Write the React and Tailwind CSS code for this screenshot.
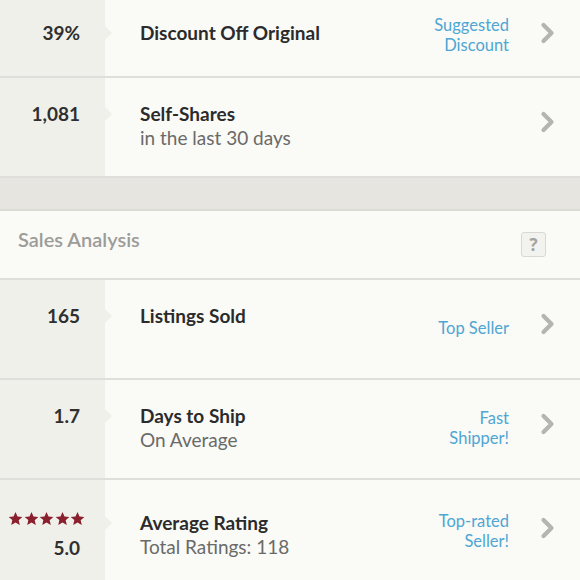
import React from "react";

const font = { fontFamily: "Lato, 'Open Sans', sans-serif" };

function Chevron() {
  return (
    <svg width="16" height="22" viewBox="0 0 16 22" className="block">
      <path d="M3.5 3 L11.5 11 L3.5 19" fill="none" stroke="#b4b4b0" strokeWidth="4.2" strokeLinecap="round" strokeLinejoin="round" />
    </svg>
  );
}

function Star() {
  return (
    <svg width="15" height="15" viewBox="0 0 24 24">
      <path d="M12 1.5l3.2 7.1 7.7.8-5.8 5.2 1.7 7.6L12 18.3l-6.8 3.9 1.7-7.6L1.1 9.4l7.7-.8z" fill="#8a1f2d" />
    </svg>
  );
}

function Row({ h, pt, left, title, sub, right, textShift = 0, chevShift = 0, last }) {
  return (
    <div className={`relative flex ${last ? "" : "border-b-2 border-[#dededa]"}`} style={{ height: h }}>
      <div className="w-[105px] shrink-0 bg-[#f0f0ea] pr-[25px] text-right" style={{ paddingTop: pt }}>
        {left}
      </div>
      <div
        className="absolute left-[105px] h-0 w-0 border-y-[7px] border-l-[7px] border-y-transparent border-l-[#f0f0ea]"
        style={{ top: pt + 5 }}
      />
      <div className="flex-1 pl-[35px]" style={{ paddingTop: pt }}>
        <div className="text-[19px] font-bold leading-[24px] text-[#2b2b2b]">{title}</div>
        {sub && <div className="text-[19px] leading-[24px] text-[#6a6a68]">{sub}</div>}
      </div>
      <div className="flex items-center">
        <div className="text-right text-[16.5px] leading-[20px] text-[#4ea6d3]" style={{ marginTop: textShift * 2 }}>
          {right}
        </div>
        <div className="ml-[31px] mr-[24px] w-[16px]" style={{ marginTop: chevShift * 2 }}>
          <Chevron />
        </div>
      </div>
    </div>
  );
}

const num = (t) => <div className="text-[19px] font-bold leading-[24px] text-[#2f2f2f]">{t}</div>;

export default function App() {
  return (
    <div className="h-[580px] w-[580px] overflow-hidden bg-[#fafaf7]" style={font}>
      <Row
        h={78}
        pt={21}
        left={num("39%")}
        title="Discount Off Original"
        right={<>Suggested<br />Discount</>}
        textShift={-3}
        chevShift={-5}
      />
      <Row h={100} pt={24} left={num("1,081")} title="Self-Shares" sub="in the last 30 days" right={null} chevShift={-5} />
      <div className="h-[33px] border-b-2 border-[#dcdcd6] bg-[#e6e5df]" />
      <div className="flex h-[69px] items-center justify-between border-b-2 border-[#dededa] pl-[18px] pr-[34px]">
        <div className="mb-[12px] text-[20px] font-semibold text-[#9c9c98]">Sales Analysis</div>
        <div
          className="flex h-[25px] w-[25px] items-center justify-center rounded-[3px] border border-[#d8d8d4] bg-[#f2f2ef] text-[17px] font-bold leading-[25px] text-[#a4a4a0]"
          style={{ fontFamily: "'Open Sans', sans-serif" }}
        >
          ?
        </div>
      </div>
      <Row h={100} pt={24} left={num("165")} title="Listings Sold" right="Top Seller" textShift={-1} chevShift={-5} />
      <Row h={100} pt={24} left={num("1.7")} title="Days to Ship" sub="On Average" right={<>Fast<br />Shipper!</>} textShift={-1} chevShift={-5} />
      <Row
        h={102}
        pt={31}
        left={
          <div className="-mr-[5px] flex flex-col items-end">
            <div className="flex gap-[0.5px]">
              <Star />
              <Star />
              <Star />
              <Star />
              <Star />
            </div>
            <div className="mr-[5px] mt-[10px] text-[19px] font-bold leading-[24px] text-[#2f2f2f]">5.0</div>
          </div>
        }
        title="Average Rating"
        sub="Total Ratings: 118"
        right={<>Top-rated<br />Seller!</>}
        chevShift={-3}
        last
      />
    </div>
  );
}
